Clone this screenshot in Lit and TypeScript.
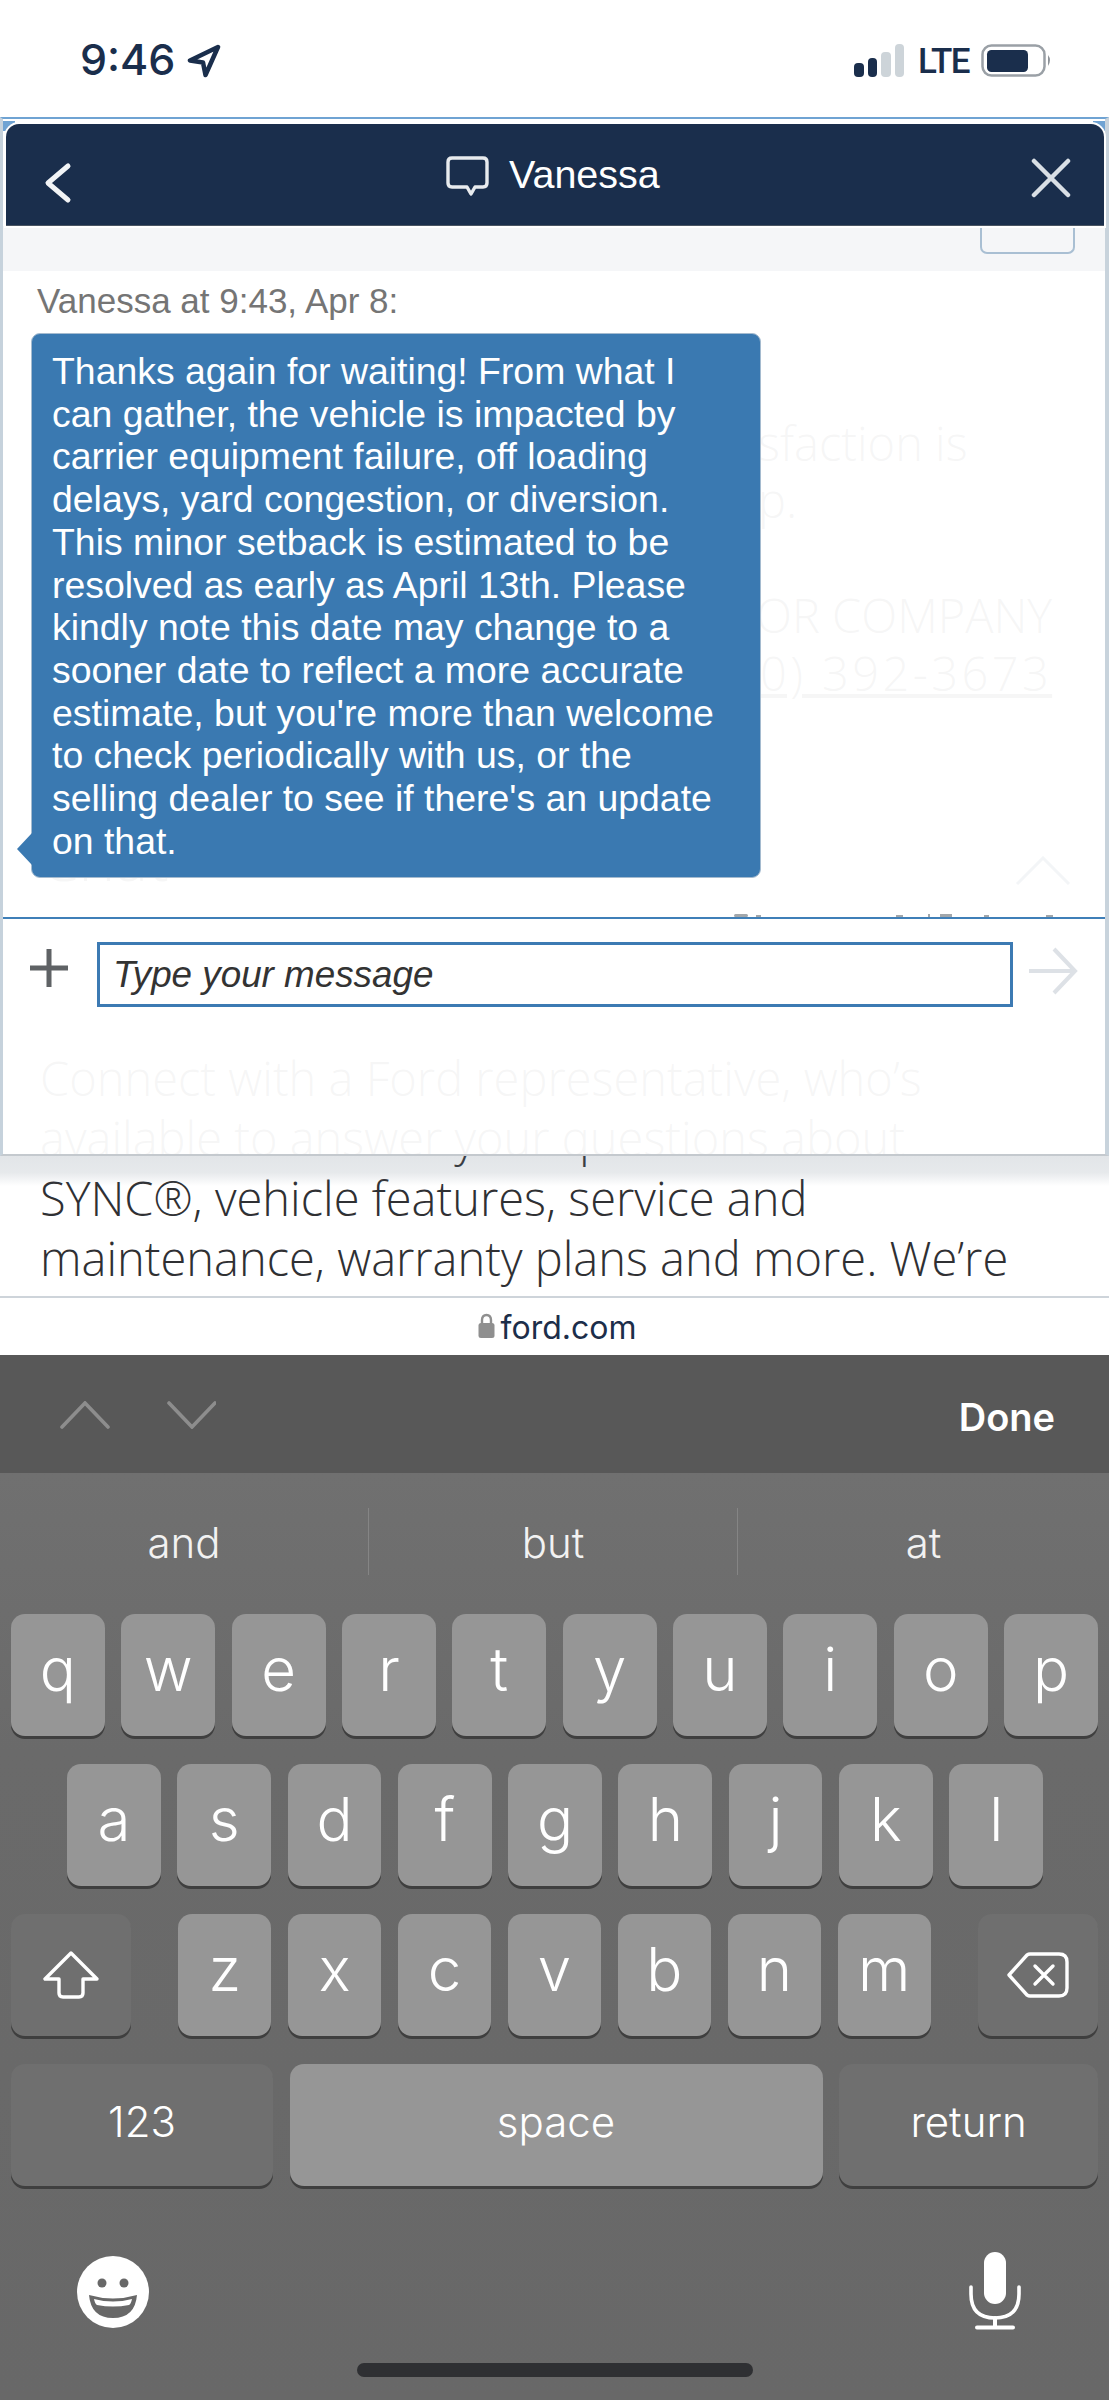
import { LitElement, html, css } from "lit";
import { customElement } from "lit/decorators.js";

const bubbleLines = [
  "Thanks again for waiting! From what I",
  "can gather, the vehicle is impacted by",
  "carrier equipment failure, off loading",
  "delays, yard congestion, or diversion.",
  "This minor setback is estimated to be",
  "resolved as early as April 13th. Please",
  "kindly note this date may change to a",
  "sooner date to reflect a more accurate",
  "estimate, but you're more than welcome",
  "to check periodically with us, or the",
  "selling dealer to see if there's an update",
  "on that.",
];

const row1 = "qwertyuiop".split("");
const row2 = "asdfghjkl".split("");
const row3 = "zxcvbnm".split("");

@customElement("app-root")
export class AppRoot extends LitElement {
  static styles = css`
    :host {
      display: block;
      width: 1109px;
      height: 2400px;
      overflow: hidden;
      background: #fff;
      font-family: "Liberation Sans", Arial, sans-serif;
    }
    svg { display: block; }

    /* status bar */
    .status {
      height: 117px;
      display: flex;
      align-items: flex-start;
      padding: 0 57px 0 80px;
      box-sizing: border-box;
      color: #1a2e4c;
      background: #fff;
    }
    .time {
      font-family: Inter, sans-serif;
      font-weight: 500;
      font-size: 43px;
      line-height: 44px;
      margin-top: 37px;
      width: 107px;
    }
    .loc { margin-top: 44px; }
    .status-right {
      margin-left: auto;
      display: flex;
      align-items: flex-start;
    }
    .lte {
      font-family: Roboto, sans-serif;
      font-weight: 500;
      font-size: 35px;
      line-height: 35px;
      letter-spacing: -1.6px;
      margin: 44px 12px 0 13px;
      width: 51px;
    }
    .signal { margin-top: 44px; }
    .battery { margin-top: 44px; }

    /* web area */
    .web {
      position: relative;
      height: 1179px;
      background: #fff;
      overflow: hidden;
      font-family: "Open Sans", sans-serif;
      font-size: 47px;
      font-weight: 300;
      color: #2f3033;
    }
    .page {
      height: 100%;
      box-sizing: border-box;
      display: flex;
      flex-direction: column;
      justify-content: flex-end;
      padding: 0 0 8px 40px;
      line-height: 60px;
      white-space: nowrap;
    }
    .frag {
      position: absolute;
      line-height: 60px;
      white-space: nowrap;
    }
    .f1 { left: 758px; top: 296px; }
    .f2 { left: 758px; top: 353px; }
    .f3 { left: 756px; top: 468px; }
    .f4 { left: 760px; top: 526px; letter-spacing: 3.4px; text-decoration: underline; }
    .f5 { left: 40px; top: 700px; font-size: 62px; line-height: 80px; }
    .chev { position: absolute; left: 1012px; top: 585px; }

    .overlay {
      position: absolute;
      left: 0;
      right: 0;
      top: 0;
      height: 1039px;
      box-sizing: border-box;
      display: flex;
      flex-direction: column;
      background: rgba(255, 255, 255, 0.957);
      border-left: 3px solid #c6d2dc;
      border-right: 4px solid #c8d3dc;
      border-bottom: 2px solid #c4c9ce;
      border-top: 2px solid #6fa3d3;
      font-family: "Liberation Sans", Arial, sans-serif;
      font-weight: 400;
    }
    .overlay::after {
      content: "";
      position: absolute;
      left: -3px;
      right: -4px;
      top: 100%;
      margin-top: 2px;
      height: 30px;
      background: linear-gradient(rgba(110, 125, 140, 0.2), rgba(110, 125, 140, 0.17) 55%, rgba(110, 125, 140, 0));
    }
    .corner-wrap {
      padding: 5px 1px 0 3px;
      background: linear-gradient(90deg, #6fa3d3 12px, #fff 12px, #fff calc(100% - 12px), #6fa3d3 calc(100% - 12px)) 0 2px / 100% 10px no-repeat, #fff;
    }
    .header {
      height: 102px;
      box-sizing: border-box;
      background: #1a2e4c;
      border-radius: 13px 13px 0 0;
      border-bottom: 1px solid #4a5563;
      box-shadow: 0 0 0 2px #fff;
      display: flex;
      align-items: flex-start;
      color: #fff;
      position: relative;
    }
    .back { margin: 38px 0 0 36px; }
    .title {
      position: absolute;
      left: 440px;
      top: 31px;
      display: flex;
      align-items: flex-start;
    }
    .title span {
      font-size: 39.5px;
      line-height: 45px;
      margin: -3px 0 0 19px;
    }
    .close { margin: 34px 33px 0 auto; }

    .strip {
      height: 45px;
      background: #f5f6f8;
      display: flex;
      justify-content: flex-end;
      padding-right: 30px;
    }
    .strip-btn {
      width: 95px;
      height: 26px;
      box-sizing: border-box;
      margin-top: 2px;
      border: 2px solid #a9bfd3;
      border-top: 0;
      border-radius: 0 0 7px 7px;
    }

    .body {
      height: 646px;
      box-sizing: border-box;
      padding-top: 10px;
      position: relative;
    }
    .label {
      font-size: 35px;
      line-height: 40px;
      color: #757575;
      margin-left: 34px;
    }
    .bubble {
      position: relative;
      margin: 12px 0 0 28px;
      width: 730px;
      height: 545px;
      box-sizing: border-box;
      padding: 16px 0 0 20px;
      background: #3a79b1;
      border: 1.5px solid #a5bbcf;
      border-radius: 9px;
      color: #fff;
      font-size: 37.4px;
      line-height: 42.7px;
      white-space: nowrap;
    }
    .bubble::before {
      content: "";
      position: absolute;
      left: -15px;
      bottom: 12px;
      border-style: solid;
      border-width: 16px 15px 16px 0;
      border-color: transparent #3a79b1 transparent transparent;
    }
    .peek { position: absolute; left: 725px; bottom: 0; }

    .input-row {
      border-top: 2px solid #3f7fb8;
      flex: 1;
      display: flex;
      align-items: flex-start;
      padding: 23px 0 0 26px;
    }
    .plus { margin-top: 6px; }
    .input {
      width: 916px;
      height: 65px;
      box-sizing: border-box;
      margin-left: 28px;
      border: 3px solid #3c7ab3;
      background: #fff;
      color: #333;
      font-style: italic;
      font-size: 36.8px;
      line-height: 59px;
      padding-left: 13px;
    }
    .send { margin: 5px 0 0 15px; }

    /* url bar */
    .url {
      height: 59px;
      box-sizing: border-box;
      border-top: 2px solid #ced4da;
      background: #fff;
      display: flex;
      justify-content: center;
      align-items: flex-start;
      padding: 11px 0 0 5px;
      color: #1c2e4a;
      font-family: Inter, sans-serif;
      font-size: 32px;
      line-height: 38px;
    }
    .lock { margin: 4px 6px 0 0; }

    /* keyboard toolbar */
    .toolbar {
      height: 118px;
      background: #585858;
      display: flex;
      align-items: flex-start;
      justify-content: space-between;
      padding: 46px 54px 0 60px;
      box-sizing: border-box;
    }
    .done {
      font-family: Inter, sans-serif;
      font-weight: 600;
      font-size: 38px;
      line-height: 44px;
      color: #fff;
      margin-top: -6px;
    }

    /* keyboard */
    .kb {
      height: 927px;
      background: linear-gradient(#707070, #6a6a6a 30%, #686868);
      font-family: Inter, sans-serif;
      color: #fff;
    }
    .suggest {
      height: 141px;
      box-sizing: border-box;
      padding-top: 35px;
      display: grid;
      grid-template-columns: 369px 369px 371px;
    }
    .suggest div {
      height: 67px;
      line-height: 70px;
      text-align: center;
      font-size: 42px;
      font-weight: 300;
      color: #f2f2f2;
      border-right: 1px solid #858585;
    }
    .suggest div:last-child { border-right: 0; }
    .row {
      display: flex;
      gap: 16.5px;
      margin-bottom: 28px;
      height: 122px;
      padding: 0 11px;
    }
    .row.two { padding: 0 66px 0 67px; }
    .row.three { justify-content: space-between; }
    .letters { display: flex; gap: 16.5px; width: 753px; }
    .key {
      flex: 1;
      display: flex;
      align-items: center;
      justify-content: center;
      box-sizing: border-box;
      height: 122px;
      padding-bottom: 12px;
      background: #969696;
      border-radius: 14px;
      box-shadow: 0 3px 0 #3f3f3f;
      font-size: 60px;
      line-height: 60px;
      font-weight: 300;
    }
    .key.dark { background: #6f6f6f; flex: none; padding-bottom: 0; }
    .key.small { font-size: 42px; padding-bottom: 6px; }
    .w120 { width: 120px; flex: none; }
    .w262 { width: 262px; flex: none; }
    .w259 { width: 259px; flex: none; }
    .wspace { flex: 1; }
    .bottom {
      display: flex;
      justify-content: space-between;
      padding: 42px 88px 0 77px;
      height: 107px;
      align-items: flex-start;
    }
    .mic { margin-top: -4px; }
    .home {
      width: 396px;
      height: 14px;
      margin: 0 auto;
      border-radius: 7px;
      background: #2f3033;
    }
  `;

  private key(c: string) {
    return html`<div class="key">${c}</div>`;
  }

  render() {
    return html`
      <div class="status">
        <div class="time">9:46</div>
        <svg class="loc" width="34" height="34" viewBox="0 0 34 34">
          <path d="M31 3 L3 16.5 L16 18.5 L18.5 31 Z" fill="none" stroke="#1a2e4c" stroke-width="4.5" stroke-linejoin="round"/>
        </svg>
        <div class="status-right">
          <svg class="signal" width="51" height="33" viewBox="0 0 51 33">
            <rect x="0" y="19" width="10" height="14" rx="4" fill="#1a2e4c"/>
            <rect x="14" y="14" width="9" height="19" rx="4" fill="#1a2e4c"/>
            <rect x="27" y="8" width="10" height="25" rx="4" fill="#cdd4d9"/>
            <rect x="41" y="0" width="9" height="33" rx="4" fill="#cdd4d9"/>
          </svg>
          <div class="lte">LTE</div>
          <svg class="battery" width="71" height="33" viewBox="0 0 71 33">
            <rect x="1.5" y="1.5" width="62" height="30" rx="9" fill="none" stroke="#9aa0a6" stroke-width="2.5"/>
            <rect x="6" y="6" width="41" height="22" rx="4.5" fill="#1a2e4c"/>
            <path d="M67 11 Q71 16 67 22 Z" fill="#8d9298"/>
          </svg>
        </div>
      </div>

      <div class="web">
        <div class="page">
          <div>Connect with a Ford representative, who’s</div>
          <div>available to answer your questions about</div>
          <div>SYNC®, vehicle features, service and</div>
          <div>maintenance, warranty plans and more. We’re</div>
        </div>
        <div class="frag f1">sfaction is</div>
        <div class="frag f2">p.</div>
        <div class="frag f3">OR COMPANY</div>
        <div class="frag f4">0) 392-3673</div>
        <div class="frag f5">Chat</div>

        <div class="overlay">
          <div class="corner-wrap">
            <div class="header">
              <svg class="back" width="30" height="42" viewBox="0 0 30 42">
                <path d="M26 4 L6 21 L26 38" fill="none" stroke="#f2f4f6" stroke-width="5" stroke-linecap="round" stroke-linejoin="round"/>
              </svg>
              <div class="title">
                <svg width="44" height="42" viewBox="0 0 44 42">
                  <path d="M6 3 H37 Q41 3 41 7 V28 Q41 32 37 32 H29 L25 39 L21 32 H6 Q2 32 2 28 V7 Q2 3 6 3 Z" fill="none" stroke="#e8ebee" stroke-width="3.4" stroke-linejoin="round"/>
                </svg>
                <span>Vanessa</span>
              </div>
              <svg class="close" width="40" height="40" viewBox="0 0 40 40">
                <path d="M3 3 L37 37 M37 3 L3 37" stroke="#d9dfe5" stroke-width="4.5" stroke-linecap="round"/>
              </svg>
            </div>
          </div>
          <div class="strip"><div class="strip-btn"></div></div>
          <div class="body">
            <div class="label">Vanessa at 9:43, Apr 8:</div>
            <div class="bubble">
              ${bubbleLines.map((l) => html`<div>${l}</div>`)}
            </div>
            <svg class="chev" width="56" height="30" viewBox="0 0 56 30">
              <path d="M2 28 L28 2 L54 28" fill="none" stroke="#f3f5f7" stroke-width="3"/>
            </svg>
            <svg class="peek" width="330" height="3" viewBox="0 0 330 3">
              <g fill="#a2a7ab">
                <rect x="6" y="0" width="14" height="3" rx="1.5"/>
                <rect x="28" y="1" width="5" height="2"/>
                <rect x="168" y="1" width="7" height="2"/>
                <rect x="200" y="0" width="2" height="3"/>
                <rect x="212" y="0" width="12" height="3"/>
                <rect x="256" y="1" width="5" height="2"/>
                <rect x="318" y="1" width="7" height="2"/>
              </g>
            </svg>
          </div>
          <div class="input-row">
            <svg class="plus" width="40" height="40" viewBox="0 0 40 40">
              <path d="M20 1 V39 M1 20 H39" stroke="#5f6265" stroke-width="5"/>
            </svg>
            <div class="input">Type your message</div>
            <svg class="send" width="50" height="48" viewBox="0 0 50 48">
              <path d="M1 24 H47 M26 2 L47 24 L26 46" fill="none" stroke="#dde1e6" stroke-width="4"/>
            </svg>
          </div>
        </div>
      </div>

      <div class="url">
        <svg class="lock" width="17" height="25" viewBox="0 0 17 25">
          <path d="M4 11 V7 Q4 2 8.5 2 Q13 2 13 7 V11" fill="none" stroke="#8f8f8f" stroke-width="2.4"/>
          <rect x="0.5" y="10" width="16" height="15" rx="2.5" fill="#8f8f8f"/>
        </svg>
        <span>ford.com</span>
      </div>

      <div class="toolbar">
        <svg width="156" height="28" viewBox="0 0 156 28">
          <path d="M2 26 L25 2 L48 26" fill="none" stroke="#8d8d8d" stroke-width="3.6" stroke-linecap="round"/>
          <path d="M109 2 L132 26 L155 2" fill="none" stroke="#8d8d8d" stroke-width="3.6" stroke-linecap="round"/>
        </svg>
        <div class="done">Done</div>
      </div>

      <div class="kb">
        <div class="suggest">
          <div>and</div><div>but</div><div>at</div>
        </div>
        <div class="row">${row1.map((c) => this.key(c))}</div>
        <div class="row two">${row2.map((c) => this.key(c))}</div>
        <div class="row three">
          <div class="key dark w120">
            <svg width="58" height="48" viewBox="0 0 58 48">
              <path d="M29 2 L3 28 H17 V42 Q17 46 21 46 H37 Q41 46 41 42 V28 H55 Z" fill="none" stroke="#fff" stroke-width="3.4" stroke-linejoin="round"/>
            </svg>
          </div>
          <div class="letters">${row3.map((c) => this.key(c))}</div>
          <div class="key dark w120">
            <svg width="64" height="46" viewBox="0 0 64 46">
              <path d="M3 23 L21 3 Q22.5 2 24 2 H53 Q61 2 61 10 V36 Q61 44 53 44 H24 Q22.5 44 21 43 Z" fill="none" stroke="#fff" stroke-width="3.4" stroke-linejoin="round"/>
              <path d="M29 14 L47 32 M47 14 L29 32" stroke="#fff" stroke-width="3.4" stroke-linecap="round"/>
            </svg>
          </div>
        </div>
        <div class="row">
          <div class="key dark small w262">123</div>
          <div class="key small wspace">space</div>
          <div class="key dark small w259">return</div>
        </div>
        <div class="bottom">
          <svg width="72" height="72" viewBox="0 0 72 72">
            <circle cx="36" cy="36" r="36" fill="#fff"/>
            <circle cx="25" cy="27" r="4.5" fill="#686868"/>
            <circle cx="47" cy="27" r="4.5" fill="#686868"/>
            <path d="M12 39 Q36 46 60 39 Q58 62 36 62 Q14 62 12 39 Z" fill="#686868"/>
            <path d="M17 43 Q36 48 55 43 Q54 48 52 49 Q36 52 20 49 Q18 48 17 43 Z" fill="#fff"/>
          </svg>
          <svg class="mic" width="52" height="78" viewBox="0 0 52 78">
            <rect x="15" y="0" width="22" height="52" rx="11" fill="#fff"/>
            <path d="M2 35 V42 Q2 66 26 66 Q50 66 50 42 V35" fill="none" stroke="#fff" stroke-width="3.6" stroke-linecap="round"/>
            <path d="M26 66 V75 M8 75.5 H44" stroke="#fff" stroke-width="4" stroke-linecap="round"/>
          </svg>
        </div>
        <div class="home"></div>
      </div>
    `;
  }
}
